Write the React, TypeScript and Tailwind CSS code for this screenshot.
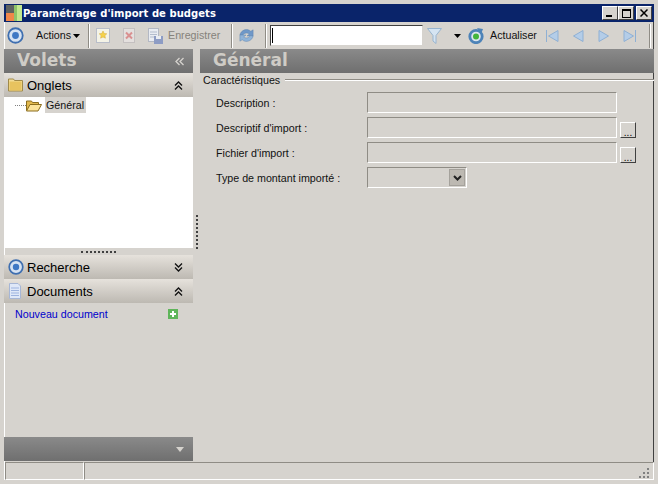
import React from 'react';

const Sep = () => <div className="w-[2px] h-[24px] border-l border-[#8f8c85] border-r border-r-white" />;

const Chevrons = ({ up }: { up?: boolean }) => (
  <svg width="9" height="9" viewBox="0 0 9 9" fill="none" stroke="#111" strokeWidth="1.3">
    {up ? (
      <path d="M1 4.5 L4.5 1 L8 4.5 M1 8.5 L4.5 5 L8 8.5" />
    ) : (
      <path d="M1 0.5 L4.5 4 L8 0.5 M1 4.5 L4.5 8 L8 4.5" />
    )}
  </svg>
);

const Target = ({ size = 16 }: { size?: number }) => (
  <svg width={size} height={size} viewBox="0 0 16 16">
    <circle cx="8" cy="8" r="6.8" fill="#d7e3f2" stroke="#3f6fb0" strokeWidth="1.7" />
    <circle cx="8" cy="8" r="3.2" fill="#3f78c4" />
  </svg>
);

const Folder = ({ open }: { open?: boolean }) =>
  open ? (
    <svg width="16" height="13" viewBox="0 0 16 13">
      <path d="M0.5 11.5V2h5l1 1.5h6v2.5" fill="#e2b94e" stroke="#8a6d1f" />
      <path d="M0.5 12L4 5.5H15.5L12 12Z" fill="#fbe39a" stroke="#8a6d1f" />
    </svg>
  ) : (
    <svg width="15" height="14" viewBox="0 0 15 14">
      <path d="M0.5 13V1h5l1 1.5h8V13Z" fill="#f3dc96" stroke="#a08a4a" />
      <rect x="1.5" y="3.5" width="12" height="9" fill="#e8c35f" />
    </svg>
  );

const Field = ({ label, button }: { label: string; button?: boolean }) => (
  <div className="flex items-center h-[25px]">
    <span className="w-[151px] shrink-0 pt-[1px]">{label}</span>
    <div className="w-[250px] h-[21px] border border-[#8f8c85] border-r-white border-b-white" />
    {button && (
      <div className="ml-[3px] mt-[4px] w-[16px] h-[16px] bg-[#d6d3ce] border border-white border-r-[#404040] border-b-[#404040] flex items-end justify-center text-[10px] leading-[9px] text-black">
        ...
      </div>
    )}
  </div>
);

const PaneHeader = ({ icon, title, up }: { icon: React.ReactNode; title: string; up?: boolean }) => (
  <div className="h-[24px] flex items-center bg-gradient-to-b from-[#e6e2dc] to-[#bdb9b2] pl-[4px] pr-[10px]">
    <span className="w-[19px] flex items-center">{icon}</span>
    <span className="flex-1 text-[13px] text-black pt-[1px]">{title}</span>
    <Chevrons up={up} />
  </div>
);

const heading = { fontFamily: '"DejaVu Sans", sans-serif' };

export default function App() {
  return (
    <div
      className="w-[658px] h-[484px] bg-[#d6d3ce] border-[4px] border-[#d6d3ce] flex flex-col overflow-hidden text-[10.7px] text-[#111]"
      style={{ fontFamily: '"Liberation Sans", sans-serif', boxShadow: 'inset 1px 1px 0 #fff, inset -1px -1px 0 #404040' }}
    >
      {/* title bar */}
      <div className="h-[18px] shrink-0 bg-[#0a246a] flex items-center text-white">
        <svg width="16" height="16" viewBox="0 0 16 16" className="shrink-0 ml-[2px]">
          <rect width="8" height="8" fill="#5f625f" />
          <rect x="8" width="8" height="16" fill="#c3e88e" />
          <rect x="8" width="3" height="16" fill="#8fc46a" />
          <rect y="8" width="8" height="8" fill="#f0874a" />
        </svg>
        <span className="ml-[1px] flex-1 text-[10px] tracking-[0.05px] font-bold whitespace-nowrap" style={heading}>
          Paramétrage d'import de budgets
        </span>
        <div className="flex mr-[2px]">
          <div className="w-[16px] h-[14px] bg-[#d6d3ce] border border-white border-r-[#404040] border-b-[#404040] flex items-end justify-start pl-[3px] pb-[2px]">
            <div className="w-[6px] h-[2px] bg-black" />
          </div>
          <div className="w-[16px] h-[14px] bg-[#d6d3ce] border border-white border-r-[#404040] border-b-[#404040] flex items-center justify-center">
            <div className="w-[9px] h-[9px] border border-black border-t-2" />
          </div>
          <div className="ml-[2px] w-[16px] h-[14px] bg-[#d6d3ce] border border-white border-r-[#404040] border-b-[#404040] flex items-center justify-center">
            <svg width="8" height="8" viewBox="0 0 8 8" stroke="#000" strokeWidth="1.5"><path d="M0.5 0.5L7.5 7.5M7.5 0.5L0.5 7.5" /></svg>
          </div>
        </div>
      </div>

      {/* toolbar */}
      <div className="h-[27px] shrink-0 flex items-center">
        <span className="ml-[3px] w-[17px] flex"><Target size={17} /></span>
        <span className="ml-[12px] w-[36px]">Actions</span>
        <svg width="7" height="4" viewBox="0 0 7 4" className="ml-[1px] mt-[1px]"><path d="M0 0H7L3.5 4Z" fill="#000" /></svg>
        <span className="ml-[8px]"><Sep /></span>
        <svg width="14" height="15" viewBox="0 0 14 15" className="ml-[6px]">
          <rect x="0.5" y="0.5" width="13" height="14" fill="#f4f3e6" stroke="#b8bdc9" />
          <path d="M7 3l1.2 2.5 2.6.3-1.9 1.8.5 2.6L7 9l-2.4 1.2.5-2.6-1.9-1.8 2.6-.3Z" fill="#f5d24a" stroke="#d0a93a" strokeWidth="0.5" />
        </svg>
        <svg width="14" height="15" viewBox="0 0 14 15" className="ml-[12px]">
          <rect x="1.5" y="0.5" width="11" height="14" fill="#e4e0de" stroke="#c4c0c0" />
          <path d="M4 4.5l6 6M10 4.5l-6 6" stroke="#d99090" strokeWidth="2" />
        </svg>
        <svg width="15" height="16" viewBox="0 0 15 16" className="ml-[12px]">
          <rect x="0.5" y="0.5" width="10" height="13" fill="#e9ecf2" stroke="#b3b8c4" />
          <path d="M2 4h7M2 6.5h7M2 9h7" stroke="#b3bccd" />
          <rect x="6" y="8" width="9" height="8" fill="#8d9cc4" />
          <rect x="8" y="8" width="5" height="3" fill="#e9ecf2" />
        </svg>
        <span className="ml-[5px] w-[53px] text-[#85827b]">Enregistrer</span>
        <span className="ml-[10px]"><Sep /></span>
        <svg width="17" height="17" viewBox="0 0 18 18" className="ml-[5px]">
          <path d="M2 8.5C3 3 10 1 13.5 4.5L16 3v6.5H9.5L12 7.5C9.5 5.5 6 6.5 5 9Z" fill="#6f98c8" stroke="#5f83ad" strokeWidth="0.5" />
          <path d="M16 9.5C15 15 8 17 4.5 13.5L2 15V8.5H8.5L6 10.5C8.5 12.5 12 11.500 13 9Z" fill="#8fb3d8" stroke="#5f83ad" strokeWidth="0.5" />
        </svg>
        <span className="ml-[10px]"><Sep /></span>
        <div className="ml-[3px] w-[153px] h-[21px] bg-white border border-[#404040] border-r-[#d6d3ce] border-b-[#d6d3ce] flex items-center pl-[1px]">
          <div className="w-[1px] h-[15px] bg-black" />
        </div>
        <svg width="15" height="16" viewBox="0 0 15 16" className="ml-[4px]">
          <path d="M0.5 0.5H14.5L9 7.5V15.5L6 13V7.5Z" fill="#d5e4f2" stroke="#98b4cf" />
        </svg>
        <svg width="7" height="4" viewBox="0 0 7 4" className="ml-[12px]"><path d="M0 0H7L3.5 4Z" fill="#000" /></svg>
        <svg width="16" height="16" viewBox="0 0 16 16" className="ml-[7px]">
          <circle cx="8" cy="8.5" r="6.2" fill="#dce6ef" stroke="#4d83b8" strokeWidth="2.8" />
          <circle cx="8" cy="8.5" r="3" fill="#43b53c" />
          <path d="M9 0l6 1-2 5Z" fill="#4d83b8" />
        </svg>
        <span className="ml-[6px] w-[46px]">Actualiser</span>
        {[0, 1, 2, 3].map((i) => (
          <svg key={i} width="14" height="14" viewBox="0 0 14 14" className={i === 0 ? 'ml-[9px]' : 'ml-[12px]'} fill="#b4cde8" stroke="#8fb0d4">
            {i === 0 && <path d="M1.5 1V13M13 1.5V12.5L3.5 7Z" />}
            {i === 1 && <path d="M12 1.5V12.5L2.5 7Z" />}
            {i === 2 && <path d="M2 1.5V12.5L11.5 7Z" />}
            {i === 3 && <path d="M12.5 1V13M1 1.5V12.5L10.5 7Z" />}
          </svg>
        ))}
        <span className="ml-[12px]"><Sep /></span>
      </div>

      {/* main */}
      <div className="flex-1 flex min-h-0">
        <aside className="w-[189px] shrink-0 flex flex-col">
          <div className="h-[24px] flex items-center bg-gradient-to-b from-[#8a8a8a] to-[#6f6f6f] pl-[13px] pr-[9px]">
            <span className="flex-1 text-[17px] font-bold text-[#cfccc6]" style={heading}>Volets</span>
            <svg width="9" height="9" viewBox="0 0 9 9" fill="none" stroke="#d6d3ce" strokeWidth="1.3">
              <path d="M4.5 1L1 4.5L4.5 8M8.5 1L5 4.5L8.5 8" />
            </svg>
          </div>
          <PaneHeader icon={<Folder />} title="Onglets" up />
          <div className="h-[151px] bg-white flex items-start">
            <div className="ml-[11px] mt-[8px] w-[11px] border-t border-dotted border-[#808080]" />
            <span className="mt-[2px]"><Folder open /></span>
            <span className="ml-[3px] bg-[#d6d3ce] pl-[1px] h-[16px] w-[41px] leading-[16px]">Général</span>
          </div>
          <div className="h-[7px] flex items-center justify-center">
            <div className="w-[35px] border-t-2 border-dotted border-[#404040]" />
          </div>
          <PaneHeader icon={<Target />} title="Recherche" />
          <PaneHeader icon={
            <svg width="14" height="16" viewBox="0 0 14 16"><path d="M1.5.5H10L12.5 3V15.5H1.5Z" fill="#dfe8f8" stroke="#a6b6d6" /><path d="M3 5h8M3 7.5h8M3 10h8M3 12.5h8" stroke="#9db3df" /></svg>
          } title="Documents" up />
          <div className="h-[21px] flex items-center pl-[11px] pr-[15px] pt-[1px] text-[#0000cc]">
            <span className="flex-1">Nouveau document</span>
            <svg width="10" height="10" viewBox="0 0 10 10"><rect width="10" height="10" fill="#5fb55a" /><path d="M5 2v6M2 5h6" stroke="#fff" strokeWidth="2" /></svg>
          </div>
          <div className="flex-1" />
          <div className="h-[24px] flex items-center justify-end bg-gradient-to-b from-[#8a8a8a] to-[#6f6f6f] pr-[9px]">
            <svg width="8" height="5" viewBox="0 0 8 5"><path d="M0 0H8L4 5Z" fill="#d6d3ce" /></svg>
          </div>
        </aside>

        <div className="w-[7px] shrink-0 flex items-center justify-center">
          <div className="h-[34px] border-l-2 border-dotted border-[#404040] -mt-[46px]" />
        </div>

        <main className="flex-1 flex flex-col min-w-0">
          <div className="h-[24px] flex items-center bg-gradient-to-b from-[#8a8a8a] to-[#6f6f6f] pl-[13px]">
            <span className="text-[17px] font-bold text-[#cfccc6]" style={heading}>Général</span>
          </div>
          <div className="flex items-center h-[14px] pl-[3px]">
            <span>Caractéristiques</span>
            <div className="flex-1 ml-[5px] h-[2px] border-t border-[#8f8c85] border-b border-b-white" />
          </div>
          <div className="pl-[16px] pt-[3px]">
            <Field label="Description :" />
            <Field label="Descriptif d'import :" button />
            <Field label="Fichier d'import :" button />
            <div className="flex items-center h-[25px]">
              <span className="w-[151px] shrink-0 pt-[1px]">Type de montant importé :</span>
              <div className="w-[100px] h-[21px] border border-[#8f8c85] border-r-white border-b-white flex items-center justify-end pr-[1px]">
                <div className="w-[16px] h-[17px] bg-[#bdb9b2] border border-[#a5a29c] flex items-center justify-center">
                  <svg width="9" height="6" viewBox="0 0 9 6" fill="none" stroke="#222" strokeWidth="2"><path d="M1 1L4.5 4.5L8 1" /></svg>
                </div>
              </div>
            </div>
          </div>
        </main>
      </div>

      {/* status bar */}
      <div className="h-[18px] shrink-0 flex mt-[1px] pl-[1px]">
        <div className="w-[79px] border border-[#8f8c85] border-r-white border-b-white" />
        <div className="flex-1 border border-[#8f8c85] border-r-white border-b-white flex items-end justify-end">
          <svg width="10" height="10" viewBox="0 0 10 10" fill="#808080" className="mr-[4px] mb-[1px]">
            <rect x="8" y="0" width="2" height="2" /><rect x="4" y="4" width="2" height="2" /><rect x="8" y="4" width="2" height="2" /><rect x="0" y="8" width="2" height="2" /><rect x="4" y="8" width="2" height="2" /><rect x="8" y="8" width="2" height="2" />
          </svg>
        </div>
      </div>
    </div>
  );
}
